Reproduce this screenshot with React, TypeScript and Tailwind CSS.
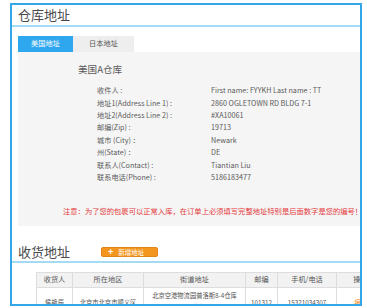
import React from 'react'

const rows: [string, string][] = [
  ['收件人 :', 'First name: FYYKH Last name : TT'],
  ['地址1(Address Line 1) :', '2860 OGLETOWN RD BLDG 7-1'],
  ['地址2(Address Line 2) :', '#XA10061'],
  ['邮编(Zip) :', '19713'],
  ['城市 (City) ：', 'Newark'],
  ['州(State) ：', 'DE'],
  ['联系人(Contact) :', 'Tiantian Liu'],
  ['联系电话(Phone) :', '5186183477'],
]

const cols = [
  { t: '收货人', w: 'w-[36px]' },
  { t: '所在地区', w: 'w-[71px]' },
  { t: '街道地址', w: 'w-[102px]' },
  { t: '邮编', w: 'w-[32px]' },
  { t: '手机/电话', w: 'w-[59px]' },
  { t: '操作', w: 'w-[48px]' },
]

export default function App(){
  return (
    <div className="w-[367px] h-[308px] bg-white pt-[3px] pl-[10px] overflow-hidden" style={{ fontFamily: '"Noto Sans CJK SC", "Noto Sans", sans-serif' }}>
      <div className="w-[352px] h-[303px] border-2 border-[#35a6e6] overflow-hidden flex flex-col">
        {/* warehouse address */}
        <div className="h-[21px] flex items-center pl-[6px] text-[13px] text-[#4a4a4a] border-b-2 border-[#a3dbf5] box-content">仓库地址</div>
        <div className="flex pl-[6px] mt-[9px] text-[7.2px]">
          <div className="w-[55px] h-[16px] flex items-center justify-center bg-[#2fa7ef] text-white">美国地址</div>
          <div className="w-[61px] h-[16px] flex items-center justify-center bg-[#eeeeee] text-[#555]">日本地址</div>
        </div>
        <div className="ml-[6px] h-[174px] shrink-0 bg-[#f5f5f5] pt-[11px] text-[#5a5a5a]">
          <div className="pl-[60px] text-[9.6px] leading-[12px]">美国A仓库</div>
          <div className="pl-[79px] mt-[10px] text-[7.2px]">
            {rows.map(([k, v]) => (
              <div key={k} className="flex h-[12.4px] items-center">
                <div className="w-[114px]">{k}</div>
                <div>{v}</div>
              </div>
            ))}
          </div>
          <div className="pl-[45px] mt-[21px] text-[7.3px] leading-[12px] text-[#e4393c] whitespace-nowrap">注意：为了您的包裹可以正常入库，在订单上必须填写完整地址特别是后面数字是您的编号！</div>
        </div>

        {/* receiving address */}
        <div className="mt-[16px] h-[21px] flex items-center pl-[6px] border-b-2 border-[#a3dbf5] box-content">
          <span className="text-[13px] text-[#4a4a4a]">收货地址</span>
          <button className="ml-[31px] mt-[1px] w-[57px] h-[10px] flex items-center bg-[#f2961f] border border-[#e3861a] rounded-[2px] text-white text-[6.5px] leading-none">
            <span className="ml-[6px] text-[9px] font-bold leading-none">+</span>
            <span className="ml-[5px]">新增地址</span>
          </button>
        </div>
        <div className="pl-[24px] mt-[9px]">
          <table className="border-collapse w-[348px] table-fixed text-[#555]">
            <thead>
              <tr className="bg-[#f2f2f2] h-[15px]">
                {cols.map(c => (
                  <th key={c.t} className={`${c.w} border border-[#dddddd] font-normal text-[7.2px] leading-none`}>{c.t}</th>
                ))}
              </tr>
            </thead>
            <tbody>
              <tr className="h-[28px] text-[6.3px] leading-[11.5px] text-center">
                <td className="border border-[#dddddd] pt-[3px]">侯艳辰</td>
                <td className="border border-[#dddddd] pt-[3px]">北京市北京市顺义区</td>
                <td className="border border-[#dddddd]">
                  <div>北京空港物流园普洛斯8-4仓库</div>
                  <div>一层收货区</div>
                </td>
                <td className="border border-[#dddddd] pt-[3px]">101312</td>
                <td className="border border-[#dddddd] pt-[3px]">15321034307</td>
                <td className="border border-[#dddddd] pt-[3px] text-[#f08a1c]">编辑</td>
              </tr>
            </tbody>
          </table>
        </div>
      </div>
    </div>
  )
}
